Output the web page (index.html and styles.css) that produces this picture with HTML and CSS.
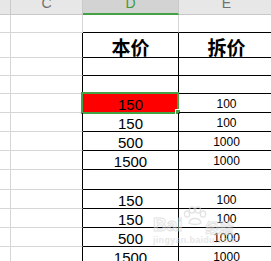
FILE: index.html
```html
<!DOCTYPE html>
<html lang="zh-CN">
<head>
<meta charset="utf-8">
<title>本价 / 拆价</title>
<link rel="stylesheet" href="styles.css">
</head>
<body>
<div class="sheet">
  <!-- column headers -->
  <div class="hd"></div>
  <div class="hd"><span>C</span></div>
  <div class="hd hd-sel"><span>D</span></div>
  <div class="hd"><span>E</span></div>

  <!-- row above the table -->
  <div class="c"></div><div class="c"></div><div class="c top"></div><div class="c top"></div>

  <!-- table header -->
  <div class="c"></div><div class="c edge"></div>
  <div class="c t big">本价</div><div class="c t big">拆价</div>

  <div class="c"></div><div class="c edge"></div><div class="c t"></div><div class="c t"></div>
  <div class="c"></div><div class="c edge"></div><div class="c t"></div><div class="c t"></div>

  <div class="c"></div><div class="c edge"></div>
  <div class="c t d red">150<i class="sel"></i><i class="handle"></i></div><div class="c t e">100</div>
  <div class="c"></div><div class="c edge"></div><div class="c t d">150</div><div class="c t e">100</div>
  <div class="c"></div><div class="c edge"></div><div class="c t d">500</div><div class="c t e">1000</div>
  <div class="c"></div><div class="c edge"></div><div class="c t d">1500</div><div class="c t e">1000</div>

  <div class="c"></div><div class="c edge"></div><div class="c t"></div><div class="c t"></div>

  <div class="c"></div><div class="c edge"></div><div class="c t d">150</div><div class="c t e">100</div>
  <div class="c"></div><div class="c edge"></div><div class="c t d">150</div><div class="c t e">100</div>
  <div class="c"></div><div class="c edge"></div><div class="c t d">500</div><div class="c t e">1000</div>
  <div class="c"></div><div class="c edge"></div><div class="c t d">1500</div><div class="c t e">1000</div>

  <!-- site watermark -->
  <div class="mark">
    <div class="mark-top">
      <span class="mark-bai">Bai</span>
      <svg class="paw" width="26" height="20" viewBox="0 0 26 20">
        <g fill="none" stroke="#d2d2d2" stroke-width="1.3">
          <ellipse cx="5" cy="8" rx="2.6" ry="3.2"/>
          <ellipse cx="10" cy="4" rx="2.6" ry="3.2"/>
          <ellipse cx="16" cy="4" rx="2.6" ry="3.2"/>
          <ellipse cx="21" cy="8" rx="2.6" ry="3.2"/>
          <path d="M7 17 C8 11 18 11 19 17 C16 19 10 19 7 17 Z"/>
        </g>
      </svg>
      <span class="mark-jy">经验</span>
    </div>
    <div class="mark-url">jingyan.baidu.com</div>
  </div>
</div>
</body>
</html>
```

FILE: styles.css
```css
html, body {
  margin: 0;
  padding: 0;
  background: #ffffff;
  overflow: hidden;
}

.sheet {
  position: relative;
  display: grid;
  grid-template-columns: 11px 72px 96px 96px;
  grid-template-rows: 15px 18px 25px 18px 18px 19px 19px 19px 19px 20px 19px 19px 19px 19px;
  font-family: "Liberation Sans", Arial, sans-serif;
  color: #000;
}

.hd {
  box-sizing: border-box;
  background: #e7e7e7;
  border-right: 1px solid #c9c9c9;
  border-bottom: 1px solid #c9c9c9;
  overflow: hidden;
  display: flex;
  justify-content: center;
  align-items: flex-start;
}

.hd span {
  display: block;
  font-size: 14px;
  line-height: 14px;
  margin-top: -4px;
  color: #707070;
}

.hd-sel {
  background: #d3d3d3;
  border-bottom: 2px solid #44a144;
}

.hd-sel span {
  color: #3d9a3d;
}

.c {
  box-sizing: border-box;
  border-right: 1px solid #d6d6d6;
  border-bottom: 1px solid #d6d6d6;
  display: flex;
  align-items: center;
  justify-content: center;
  position: relative;
}

.c.edge {
  border-right-color: #000;
}

.c.top {
  border-bottom-color: #000;
}

.c.top:nth-child(4n+3) {
  border-right-color: #d6d6d6;
}

.c.t {
  border-right-color: #000;
  border-bottom-color: #000;
}

.big {
  font-family: "Noto Sans CJK SC", "Liberation Sans", sans-serif;
  font-weight: 700;
  font-size: 19px;
  line-height: 19px;
  padding-top: 3px;
}

.d {
  font-size: 15px;
  line-height: 15px;
  padding-top: 2px;
}

.e {
  font-size: 12px;
  line-height: 12px;
  padding-top: 1px;
}

.red {
  background: #ff0000;
}

.sel {
  position: absolute;
  left: -2px;
  top: -2px;
  right: -1px;
  bottom: -2px;
  border: 2px solid #44a144;
}

.handle {
  position: absolute;
  left: 92px;
  top: 15px;
  width: 4px;
  height: 4px;
  background: #44a144;
  border: 1px solid #ffffff;
}

/* faint site watermark laid over the lower cells */
.mark {
  position: absolute;
  left: 153px;
  top: 206px;
  width: 90px;
  pointer-events: none;
  opacity: 0.6;
}

.mark-top {
  display: flex;
  align-items: flex-end;
  height: 28px;
}

.mark-bai {
  font-family: "Liberation Sans", Arial, sans-serif;
  font-weight: 700;
  font-size: 19px;
  line-height: 19px;
  color: rgba(255, 255, 255, 0.6);
  -webkit-text-stroke: 1px #d2d2d2;
}

.paw {
  margin: 0 0 8px -1px;
}

.mark-jy {
  font-family: "Noto Sans CJK SC", sans-serif;
  font-weight: 700;
  font-size: 14px;
  line-height: 14px;
  margin-left: -2px;
  color: rgba(255, 255, 255, 0.6);
  -webkit-text-stroke: 0.8px #d2d2d2;
}

.mark-url {
  font-family: "Liberation Sans", Arial, sans-serif;
  font-weight: 700;
  font-size: 9px;
  line-height: 9px;
  margin-top: 2px;
  color: #d8d8d8;
  letter-spacing: 0.3px;
}
```
